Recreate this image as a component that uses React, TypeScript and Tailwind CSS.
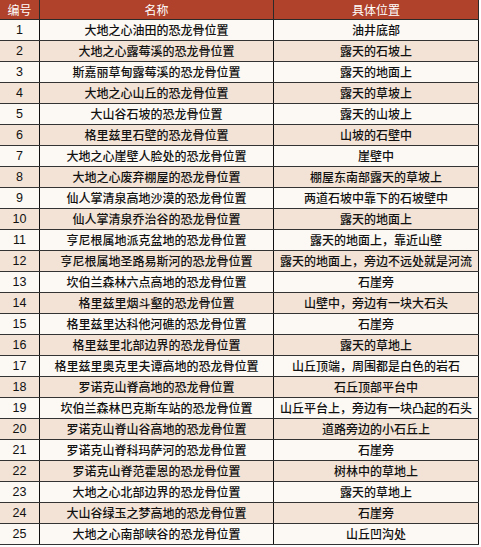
import React from "react";

const rows: [string, string][] = [
  ["大地之心油田的恐龙骨位置", "油井底部"],
  ["大地之心露莓溪的恐龙骨位置", "露天的石坡上"],
  ["斯嘉丽草甸露莓溪的恐龙骨位置", "露天的地面上"],
  ["大地之心山丘的恐龙骨位置", "露天的草坡上"],
  ["大山谷石坡的恐龙骨位置", "露天的山坡上"],
  ["格里兹里石壁的恐龙骨位置", "山坡的石壁中"],
  ["大地之心崖壁人脸处的恐龙骨位置", "崖壁中"],
  ["大地之心废弃棚屋的恐龙骨位置", "棚屋东南部露天的草坡上"],
  ["仙人掌清泉高地沙漠的恐龙骨位置", "两道石坡中靠下的石坡壁中"],
  ["仙人掌清泉乔治谷的恐龙骨位置", "露天的地面上"],
  ["亨尼根属地派克盆地的恐龙骨位置", "露天的地面上，靠近山壁"],
  ["亨尼根属地圣路易斯河的恐龙骨位置", "露天的地面上，旁边不远处就是河流"],
  ["坎伯兰森林六点高地的恐龙骨位置", "石崖旁"],
  ["格里兹里烟斗壑的恐龙骨位置", "山壁中，旁边有一块大石头"],
  ["格里兹里达科他河礁的恐龙骨位置", "石崖旁"],
  ["格里兹里北部边界的恐龙骨位置", "露天的草地上"],
  ["格里兹里奥克里夫谭高地的恐龙骨位置", "山丘顶端，周围都是白色的岩石"],
  ["罗诺克山脊高地的恐龙骨位置", "石丘顶部平台中"],
  ["坎伯兰森林巴克斯车站的恐龙骨位置", "山丘平台上，旁边有一块凸起的石头"],
  ["罗诺克山脊山谷高地的恐龙骨位置", "道路旁边的小石丘上"],
  ["罗诺克山脊科玛萨河的恐龙骨位置", "石崖旁"],
  ["罗诺克山脊范霍恩的恐龙骨位置", "树林中的草地上"],
  ["大地之心北部边界的恐龙骨位置", "露天的草地上"],
  ["大山谷绿玉之梦高地的恐龙骨位置", "石崖旁"],
  ["大地之心南部峡谷的恐龙骨位置", "山丘凹沟处"],
];

const font = { fontFamily: '"Noto Sans CJK SC", "Noto Sans", sans-serif' };

export default function App() {
  return (
    <div className="w-[481px] h-[547px] bg-white text-[12px] leading-none text-[#111111] font-medium" style={font}>
      <div className="w-[479px] flex flex-col">
        <div className="grid grid-cols-[40px_234px_205px] h-[20px] bg-[#b0412a] text-white border-b border-[#2a2a2a] font-normal">
          <div className="flex items-center justify-center border-r border-[#2a2a2a]">编号</div>
          <div className="flex items-center justify-center border-r border-[#2a2a2a]">名称</div>
          <div className="flex items-center justify-center border-r border-[#2a2a2a]">具体位置</div>
        </div>
        {rows.map(([name, loc], i) => (
          <div
            key={i}
            className={
              "grid grid-cols-[40px_234px_205px] h-[21px] border-b border-[#333333] " +
              (i % 2 === 0 ? "bg-[#fcf8f3]" : "bg-[#f2e3d6]")
            }
          >
            <div className="flex items-center justify-center border-r border-[#111111] text-[12.5px] font-normal" style={{ fontFamily: '"Liberation Sans", Arial, sans-serif' }}>
              {i + 1}
            </div>
            <div className="flex items-center justify-center border-r border-[#111111] whitespace-nowrap">{name}</div>
            <div className="flex items-center justify-center border-r border-[#111111] whitespace-nowrap">{loc}</div>
          </div>
        ))}
      </div>
    </div>
  );
}
